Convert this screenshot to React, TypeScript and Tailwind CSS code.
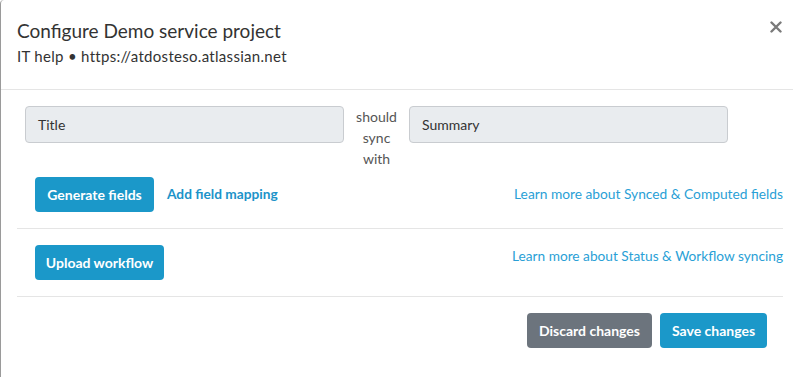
import React from 'react';

const App: React.FC = () => {
  return (
    <div className="h-[377px] w-full overflow-hidden bg-white font-['Lato','Open_Sans',sans-serif]">
      <div className="flex h-full flex-col border-l border-[#9a9a9a] rounded-tl-[4px]">
        {/* Header */}
        <header className="flex items-start justify-between border-b border-[#e5e5e5] pl-[16px] pr-[11px] pt-[20px] pb-[22px]">
          <div>
            <h1 className="text-[19px] leading-[22px] text-[#333]">Configure Demo service project</h1>
            <p className="mt-[4px] text-[15px] leading-[21px] tracking-[0.3px] text-[#333]">
              IT help • https://atdosteso.atlassian.net
            </p>
          </div>
          <button className="mt-[1px] text-[#7a7a7a]" aria-label="Close">
            <svg width="12" height="12" viewBox="0 0 12 12" fill="none" stroke="currentColor" strokeWidth="2.4" strokeLinecap="round">
              <path d="M1.5 1.5l9 9M10.5 1.5l-9 9" />
            </svg>
          </button>
        </header>

        {/* Body */}
        <main className="pl-[16px] pr-[10px] text-[14px]">
          {/* Synced fields */}
          <section className="border-b border-[#e5e5e5] pt-[16px] pb-[16px]">
            <div className="flex items-start px-[8px]">
              <div className="flex h-[37px] w-[319px] items-center rounded-[4px] border border-[#c9ccd0] bg-[#e9ecef] px-[12px] text-[#333]">
                Title
              </div>
              <div className="w-[65px] text-center leading-[21px] text-[#555]">
                should
                <br />
                sync
                <br />
                with
              </div>
              <div className="flex h-[37px] w-[319px] items-center rounded-[4px] border border-[#c9ccd0] bg-[#e9ecef] px-[12px] text-[#333]">
                Summary
              </div>
            </div>
            <div className="mt-[8px] flex items-center justify-between pl-[18px]">
              <div className="flex items-center gap-[13px]">
                <button className="h-[35px] w-[119px] rounded-[4px] bg-[#1b98c9] font-bold text-white">
                  Generate fields
                </button>
                <a className="text-[13.7px] font-bold text-[#1c93c9]">Add field mapping</a>
              </div>
              <a className="text-[13.75px] text-[#2a9fd6]">Learn more about Synced &amp; Computed fields</a>
            </div>
          </section>

          {/* Workflow */}
          <section className="flex items-start justify-between border-b border-[#e5e5e5] pt-[16px] pb-[16px] pl-[18px]">
            <button className="h-[35px] w-[129px] rounded-[4px] bg-[#1b98c9] font-bold text-white">
              Upload workflow
            </button>
            <a className="mt-[1px] text-[13.7px] leading-[20px] text-[#2a9fd6]">Learn more about Status &amp; Workflow syncing</a>
          </section>

          {/* Footer */}
          <footer className="flex justify-end gap-[8px] pt-[16px] pr-[16px]">
            <button className="h-[35px] w-[125px] rounded-[4px] bg-[#6c747d] font-bold text-white">
              Discard changes
            </button>
            <button className="h-[35px] w-[107px] rounded-[4px] bg-[#1b98c9] font-bold text-white">
              Save changes
            </button>
          </footer>
        </main>
      </div>
    </div>
  );
};

export default App;
